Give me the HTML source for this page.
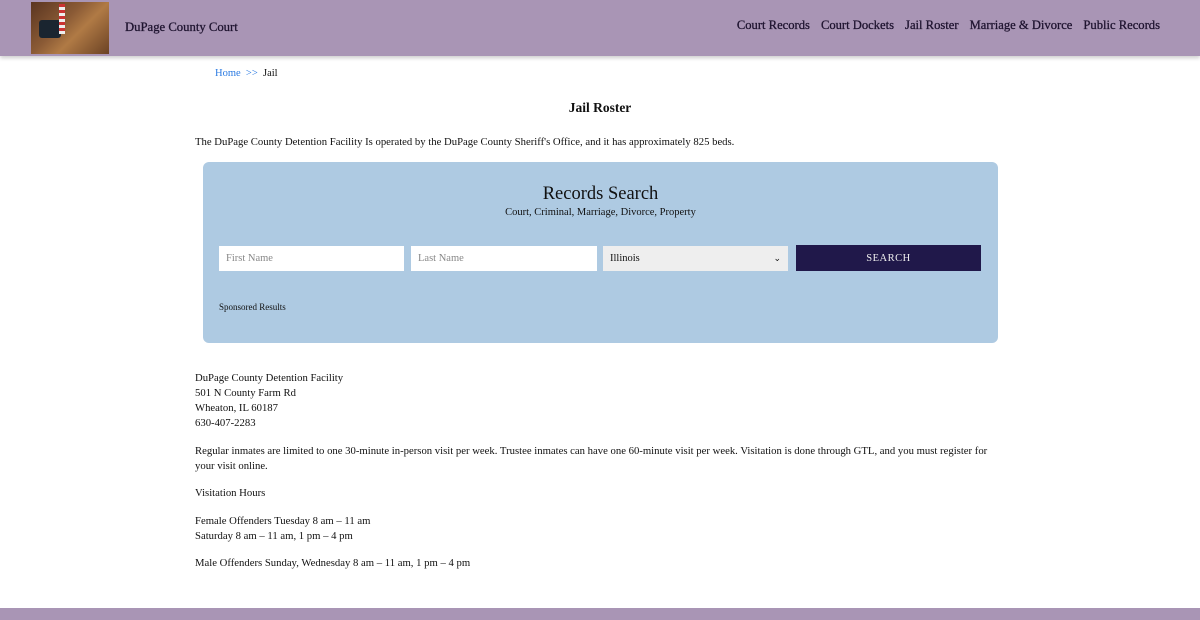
<!DOCTYPE html>
<html><head><meta charset="utf-8"><style>
*{box-sizing:border-box;margin:0;padding:0}
body{width:1200px;height:620px;overflow:hidden;background:#fff;font-family:"Liberation Serif",serif;color:#111;position:relative}
.hdr{position:absolute;left:0;top:0;width:1200px;height:56px;background:#a995b5;box-shadow:0 2px 4px rgba(0,0,0,.2)}
.logo{position:absolute;left:31px;top:2px;width:78px;height:52px;background:linear-gradient(135deg,#5a3520 0%,#8a5a35 40%,#b07a45 60%,#6b4224 100%)}
.logo:before{content:"";position:absolute;left:8px;top:18px;width:22px;height:18px;background:#1a2530;border-radius:3px}
.logo:after{content:"";position:absolute;left:28px;top:2px;width:6px;height:30px;background:repeating-linear-gradient(#c33 0 3px,#eee 3px 6px)}
.brand{position:absolute;left:125px;top:20px;font-size:12.7px;color:#1f1430;-webkit-text-stroke:.3px #1f1430}
.nav{position:absolute;right:40px;top:18px;font-size:12.6px;color:#1f1430;-webkit-text-stroke:.3px #1f1430}
.nav span{margin-left:11px}
.bc{position:absolute;left:215px;top:68px;font-size:10.5px}
.bc a{color:#2a7ae2;text-decoration:none}
h1{position:absolute;left:0;width:1200px;text-align:center;top:100px;font-size:13.5px;font-weight:bold}
p{position:absolute;left:195px;font-size:10.7px;line-height:15px;width:805px}
.box{position:absolute;left:203px;top:162px;width:795px;height:181px;background:#aecae2;border-radius:6px}
.box h2{position:absolute;top:22px;width:100%;text-align:center;font-size:18.5px;font-weight:normal}
.box .sub{position:absolute;top:45px;width:100%;text-align:center;font-size:10.5px}
.in{position:absolute;top:84px;height:25px;background:#fff;font-size:10.5px;color:#888;padding:7px 7px;width:185px}
.sel{background:#eee;color:#111}
.btn{position:absolute;left:593px;top:83px;width:185px;height:26px;background:#20184a;color:#eee;font-size:10.5px;text-align:center;line-height:28px;letter-spacing:.5px}
.sp{position:absolute;left:16px;top:140px;font-size:9px}
.foot{position:absolute;left:0;top:608px;width:1200px;height:12px;background:#a995b5}
</style></head><body>
<div class="hdr"><div class="logo"></div><div class="brand">DuPage County Court</div>
<div class="nav"><span>Court Records</span><span>Court Dockets</span><span>Jail Roster</span><span>Marriage &amp; Divorce</span><span>Public Records</span></div></div>
<div class="bc"><a>Home</a> &nbsp;<a>&gt;&gt;</a> &nbsp;Jail</div>
<h1>Jail Roster</h1>
<p style="top:135px">The DuPage County Detention Facility Is operated by the DuPage County Sheriff's Office, and it has approximately 825 beds.</p>
<div class="box"><h2>Records Search</h2><div class="sub">Court, Criminal, Marriage, Divorce, Property</div>
<div class="in" style="left:16px">First Name</div>
<div class="in" style="left:208px;width:186px">Last Name</div>
<div class="in sel" style="left:400px">Illinois<span style="float:right;font-size:9px">&#8964;</span></div>
<div class="btn">SEARCH</div>
<div class="sp">Sponsored Results</div></div>
<p style="top:371px">DuPage County Detention Facility<br>501 N County Farm Rd<br>Wheaton, IL 60187<br>630-407-2283</p>
<p style="top:444px">Regular inmates are limited to one 30-minute in-person visit per week. Trustee inmates can have one 60-minute visit per week. Visitation is done through GTL, and you must register for your visit online.</p>
<p style="top:486px">Visitation Hours</p>
<p style="top:514px">Female Offenders Tuesday 8 am – 11 am<br>Saturday 8 am – 11 am, 1 pm – 4 pm</p>
<p style="top:556px">Male Offenders Sunday, Wednesday 8 am – 11 am, 1 pm – 4 pm</p>
<div class="foot"></div>
</body></html>
